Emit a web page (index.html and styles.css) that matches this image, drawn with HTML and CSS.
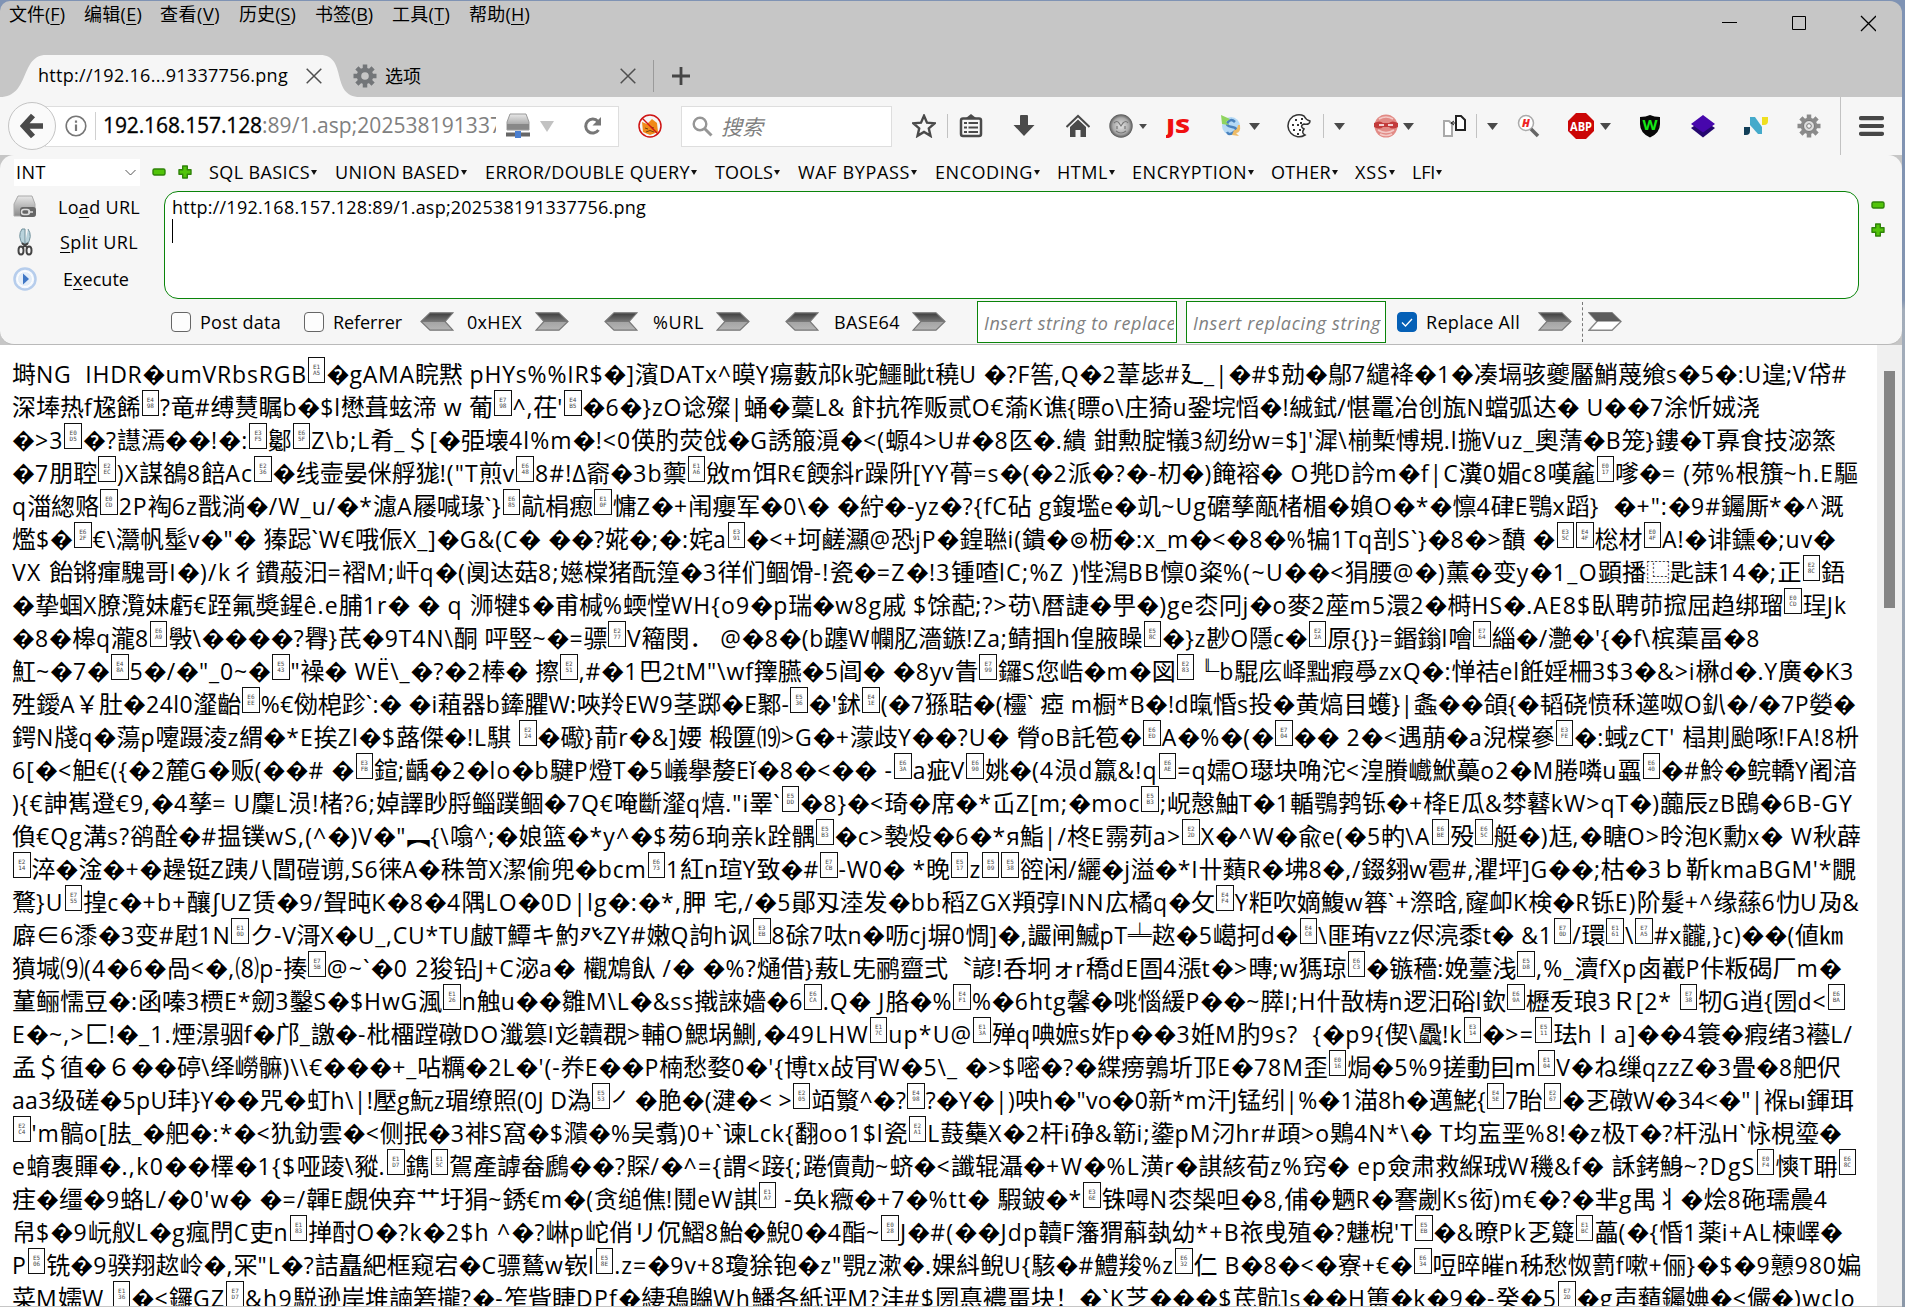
FILE: index.html
```html
<!DOCTYPE html>
<html lang="zh-CN">
<head>
<meta charset="utf-8">
<title>1.asp</title>
<link rel="stylesheet" href="styles.css">
</head>
<body>
<svg class="defs" width="0" height="0">
  <defs>
    <linearGradient id="steel" x1="0" y1="0" x2="0" y2="1"><stop offset="0" stop-color="#3c3c3c"/><stop offset=".5" stop-color="#777"/><stop offset=".52" stop-color="#a4a4a4"/><stop offset="1" stop-color="#b5b5b5"/></linearGradient>
    <linearGradient id="metal" x1="0" y1="0" x2="0" y2="1"><stop offset="0" stop-color="#e8e8e8"/><stop offset="1" stop-color="#8a8a8a"/></linearGradient>
    <radialGradient id="ball"><stop offset="0" stop-color="#e4e4e4"/><stop offset=".7" stop-color="#a8a8a8"/><stop offset="1" stop-color="#555"/></radialGradient>
    <symbol id="right" viewBox="0 0 34 19"><path d="M1 .8H24L33 9.5 24 18.2H1L9 9.5z" fill="url(#steel)" stroke="#777" stroke-width="1.2"/></symbol>
    <symbol id="left" viewBox="0 0 34 19"><path d="M33 .8H10L1 9.5 10 18.2H33L25 9.5z" fill="url(#steel)" stroke="#777" stroke-width="1.2"/></symbol>
    <symbol id="tri" viewBox="0 0 11 7"><path d="M0 0h11L5.5 7z" fill="#4a4a4a"/></symbol>
    <symbol id="close" viewBox="0 0 16 16"><path d="M.7.7l14.6 14.6M15.3.7L.7 15.3" stroke="#4f4f4f" stroke-width="1.5" fill="none"/></symbol>
    <symbol id="minus" viewBox="0 0 14 14"><rect x="1" y="4" width="12" height="6" rx="1.5" fill="#52c40a" stroke="#2f8309" stroke-width="1.4"/></symbol>
    <symbol id="plus" viewBox="0 0 14 14"><path d="M4.7 1h4.6v3.7H13v4.6H9.3V13H4.7V9.3H1V4.7h3.7z" fill="#52c40a" stroke="#2f8309" stroke-width="1.4" stroke-linejoin="round"/></symbol>
    <symbol id="cog" viewBox="0 0 24 24"><g stroke="currentColor" stroke-width="4.5"><path d="M12 .5v23M.5 12h23M3.9 3.9l16.2 16.2M20.1 3.9L3.9 20.1"/></g><circle cx="12" cy="12" r="8.3" fill="currentColor"/></symbol>
  </defs>
</svg>
<div class="window">
  <header class="titlebar">
    <nav class="menubar">
      <span data-w="56">文件(<u>F</u>)</span><span data-w="58">编辑(<u>E</u>)</span><span data-w="60">查看(<u>V</u>)</span><span data-w="57">历史(<u>S</u>)</span><span data-w="58">书签(<u>B</u>)</span><span data-w="58">工具(<u>T</u>)</span><span data-w="61">帮助(<u>H</u>)</span>
    </nav>
    <svg class="controls" width="154" height="18" viewBox="0 0 154 18"><path d="M0 7.5h15M70.500 1.500h13v13h-13z" fill="none" stroke="#000"/><path d="M139 1l15 15M154 1l-15 15" fill="none" stroke="#000" stroke-width="1.3"/></svg>
  </header>
  <div class="tabs">
    <div class="tab active">
      <svg class="tab-shape" width="360" height="42" viewBox="0 0 360 42"><path d="M0 42C30 42 20 0 46 0H320C348 0 330 42 360 42z" fill="#f6f6f6"/></svg>
      <span class="tab-title" data-w="250">http://192.16...91337756.png</span>
      <svg width="16" height="16"><use href="#close"/></svg>
    </div>
    <div class="tab second">
      <svg class="grey" width="24" height="24"><use href="#cog"/><circle cx="12" cy="12" r="3.8" fill="#c6c6c6"/></svg>
      <span class="tab-title">选项</span>
      <svg width="16" height="16"><use href="#close"/></svg>
    </div>
    <svg class="new-tab" width="18" height="18" viewBox="0 0 18 18"><path d="M9 0v18M0 9h18" stroke="#454545" stroke-width="2.8"/></svg>
  </div>

  <div class="navbar">
    <div class="address">
      <span class="back"><svg width="24" height="26" viewBox="0 0 24 26"><path d="M13 2.500L3.500 13 13 23.500M4 13h19" fill="none" stroke="#4a4a4a" stroke-width="5.500"/></svg></span>
      <svg class="info" width="22" height="22" viewBox="0 0 22 22"><circle cx="11" cy="11" r="9.800" fill="none" stroke="#777" stroke-width="1.600"/><path d="M11 9.500V16M11 5.500v2.300" stroke="#777" stroke-width="2.200"/></svg>
      <span class="url"><b data-w="159">192.168.157.128</b><span data-w="240">:89/1.asp;202538191337</span></span>
      <svg class="server" width="24" height="26" viewBox="0 0 24 26"><path d="M4 1h16l3 8v8H1V9z" fill="url(#metal)" stroke="#999"/><path d="M1 11h22v5H1z" fill="#888"/><path d="M0 21.500h24" stroke="#666" stroke-width="4"/><rect x="9" y="18" width="6" height="7" fill="#4b7fd0"/></svg>
      <svg class="drop" width="14" height="11" viewBox="0 0 14 11"><path d="M0 0h14L7 11z" fill="#c2c2c2"/></svg>
      <svg class="reload" width="19" height="20" viewBox="0 0 19 20"><path d="M15 5.500A7 7 0 1 0 15.500 14" fill="none" stroke="#777" stroke-width="3"/><path d="M18 1v8.500h-8.500z" fill="#777"/></svg>
    </div>
    <svg width="24" height="24" viewBox="0 0 24 24"><path d="M4 8l5 2 5-5 5 4 1 9-8 3-7-3z" fill="#f08a18"/><path d="M7 14l3 1m3-2l3 1m-8 4q4-3 8 0" stroke="#754411" fill="none"/><circle cx="12" cy="12" r="11" fill="none" stroke="#cf1414" stroke-width="1.500"/><path d="M4 4l16 16" stroke="#cf1414" stroke-width="1.500"/></svg>
    <div class="search"><svg width="21" height="21" viewBox="0 0 21 21"><circle cx="8" cy="8" r="6.300" fill="none" stroke="#969696" stroke-width="2.400"/><path d="M12.500 12.500L19.500 19.500" stroke="#969696" stroke-width="3"/></svg><i>搜索</i></div>
    <svg width="24" height="24" viewBox="0 0 24 24"><path d="M12 1.800l3 6.900 7.500.7-5.700 5 1.700 7.500L12 18l-6.500 3.900 1.700-7.500-5.700-5 7.500-.7z" fill="none" stroke="#4a4a4a" stroke-width="2.400"/></svg>
    <i class="sep"></i>
    <svg width="24" height="24" viewBox="0 0 24 24"><path d="M7 4l5-4 5 4z" fill="#4a4a4a"/><rect x="2" y="4.500" width="20" height="17.500" rx="2" fill="none" stroke="#4a4a4a" stroke-width="2.500"/><path d="M5 9h3M5 13.500h3M5 18h3M9.500 9H19M9.500 13.500H19M9.500 18H19" stroke="#4a4a4a" stroke-width="2.200"/></svg>
    <svg width="24" height="24" viewBox="0 0 24 24"><path d="M8 2q0-1 1-1h6q1 0 1 1v9h6.500L12 22 1.500 11H8z" fill="#4a4a4a"/></svg>
    <svg width="24" height="24" viewBox="0 0 24 24"><path d="M.5 13L12 2l11.500 11" fill="none" stroke="#4a4a4a" stroke-width="2"/><path d="M4 13l8-7.500L20 13v10h-5.500v-7h-5v7H4z" fill="#4a4a4a"/></svg>
    <svg width="24" height="24" viewBox="0 0 24 24"><circle cx="12" cy="12" r="11.700" fill="url(#ball)"/><path d="M5 9q3-3 5 0l2 3 2-3q3-3 5 0M7 17q5 4 10 0M8 12v3m8-3v3" stroke="#777" fill="none" stroke-width="1.200"/></svg>
    <svg class="small" width="8" height="5"><use href="#tri"/></svg>
    <svg width="26" height="24" viewBox="0 0 26 24"><text x="0" y="19" class="js" textLength="24" lengthAdjust="spacingAndGlyphs">JS</text></svg>
    <svg width="24" height="24" viewBox="0 0 24 24"><circle cx="12" cy="12" r="9" fill="#b5d9f5"/><path d="M16 8q-4-4-7 0t4 5 2 5-7 0" fill="none" stroke="#4a82bd" stroke-width="2.500"/><path d="M2 1l1 9 7 1-3-3 4-3z" fill="#8fd45f"/><path d="M21 11q1 8-4 8l3 3-7-1 2-5q3 1 4-5z" fill="#eebb66"/></svg>
    <svg width="11" height="7"><use href="#tri"/></svg>
    <svg width="24" height="24" viewBox="0 0 24 24"><path d="M17 2A11 11 0 1 0 18 21Q14 19 17 15 12 12 17 10q6 1 6-3-4-1-6-5z" fill="#fff" stroke="#333" stroke-width="1.500"/><path d="M8 6h2M14 5h2M5 11h2M10 11h2M6 16h2M12 16h2M10 20h2M13 9h2" stroke="#333" stroke-width="2"/></svg>
    <i class="sep"></i>
    <svg width="11" height="7"><use href="#tri"/></svg>
    <svg width="24" height="24" viewBox="0 0 24 24"><circle cx="12" cy="12" r="11.500" fill="#e28a85"/><path d="M0 9q6-3 9 0h6q3-3 9 0v4q-6 3-9 0H9q-3 3-9 0z" fill="#c23b3b"/><path d="M5 11h5m4 0h5" stroke="#fff" stroke-width="1.600"/><path d="M4 16q8 5 16 0M6 20q6 3 12 0M5 5q7-4 14 0" stroke="#f3c9c6" stroke-width="1.600" fill="none"/></svg>
    <svg width="11" height="7"><use href="#tri"/></svg>
    <svg width="24" height="24" viewBox="0 0 24 24"><path d="M2 7h5l3 3v12H2z" fill="#fff" stroke="#aaa" stroke-width="2"/><path d="M14 2h5l4 4v10h-9z" fill="#fff" stroke="#222" stroke-width="2"/><path d="M14 9h-4m2-2l-3 2 3 2" stroke="#222" fill="none"/></svg>
    <i class="sep"></i>
    <svg width="11" height="7"><use href="#tri"/></svg>
    <svg width="24" height="24" viewBox="0 0 24 24"><circle cx="9" cy="9" r="7.500" fill="#fff" stroke="#aaa" stroke-width="1.500"/><path d="M14 15l7 7" stroke="#666" stroke-width="3.500"/><text x="5" y="13" class="h">H</text></svg>
    <svg width="26" height="26" viewBox="0 0 26 26"><path d="M8 0h10l8 8v10l-8 8H8l-8-8V8z" fill="#cb0606"/><text x="2" y="17.500" class="abp" textLength="22" lengthAdjust="spacingAndGlyphs">ABP</text></svg>
    <svg width="11" height="7"><use href="#tri"/></svg>
    <svg width="24" height="24" viewBox="0 0 24 24"><path d="M12 1q4 2 10 2v7q0 9-10 13.500Q2 19 2 10V3q6 0 10-2z" fill="#080808"/><text x="4.500" y="16" class="w" textLength="15" lengthAdjust="spacingAndGlyphs">W</text></svg>
    <svg width="24" height="24" viewBox="0 0 24 24"><path d="M0 14l12-8 12 8-12 9.500z" fill="#25076f"/><path d="M0 10L12 1l12 9-12 8.500z" fill="#4707ac"/></svg>
    <svg width="24" height="24" viewBox="0 0 24 24"><path d="M0 13h6v4q0 4-4 4H0z" fill="#123f58"/><path d="M6 3h5l7 10v7h-4L6 11z" fill="#44aacb"/><path d="M18 3h6v4q0 4-4 4h-2z" fill="#efdf20"/></svg>
    <svg class="gear" width="24" height="24"><use href="#cog"/><circle cx="12" cy="12" r="5.500" fill="#ddd" stroke="#777"/><circle cx="12" cy="12" r="2.300" fill="#f6f6f6" stroke="#777"/></svg>
    <i class="sep tall"></i>
    <svg width="25" height="20" viewBox="0 0 25 20"><path d="M2 2.200h21M2 10h21M2 17.800h21" stroke="#474747" stroke-width="4.200" stroke-linecap="round"/></svg>
  </div>

  <section class="hackbar">
    <div class="hack-menu">
      <span class="select"><span data-w="30">INT</span><svg width="11" height="7" viewBox="0 0 11 7"><path d="M.5 1l5 5 5-5" fill="none" stroke="#555"/></svg></span>
      <svg width="14" height="14"><use href="#minus"/></svg><svg width="14" height="14"><use href="#plus"/></svg>
      <span class="item"><span data-w="101">SQL BASICS</span></span><span class="item"><span data-w="125">UNION BASED</span></span><span class="item"><span data-w="205">ERROR/DOUBLE QUERY</span></span><span class="item"><span data-w="58">TOOLS</span></span><span class="item"><span data-w="112">WAF BYPASS</span></span><span class="item"><span data-w="98">ENCODING</span></span><span class="item"><span data-w="51">HTML</span></span><span class="item"><span data-w="115">ENCRYPTION</span></span><span class="item"><span data-w="60">OTHER</span></span><span class="item"><span data-w="33">XSS</span></span><span class="item"><span data-w="23">LFI</span></span>
    </div>
    <div class="hack-main">
      <div class="actions">
        <svg width="24" height="24" viewBox="0 0 24 24"><path d="M5 1h14l3 8v12H1V9z" fill="url(#metal)" stroke="#aaa"/><rect x="7" y="12" width="16" height="10" rx="3" fill="#666"/><path d="M11 14.500h3a2.500 2.500 0 0 1 0 5h-3a2.500 2.500 0 0 1 0-5m4 2.500h5" stroke="#ddd" fill="none" stroke-width="1.500"/></svg><span class="load" data-w="82">Lo<u>a</u>d URL</span>
        <svg width="24" height="28" viewBox="0 0 24 28"><path d="M9 1Q4 8 10 17l2-2V1zM15 1q5 7-1 16l-2-2" fill="#b9d3dc" stroke="#70909b"/><path d="M9 15l6 5M15 15l-6 5" stroke="#444" stroke-width="2"/><ellipse cx="8" cy="22.500" rx="2.500" ry="4" fill="none" stroke="#444" stroke-width="2"/><ellipse cx="16" cy="22.500" rx="2.500" ry="4" fill="none" stroke="#444" stroke-width="2"/></svg><span class="split" data-w="78"><u>S</u>plit URL</span>
        <svg width="24" height="24" viewBox="0 0 24 24"><circle cx="12" cy="12" r="10.500" fill="#f4f8fd" stroke="#b6cdec" stroke-width="2.500"/><circle cx="12" cy="12" r="7.500" fill="#e3edf8" stroke="#fff"/><path d="M10 6.500l6 5.500-6 5.500z" fill="#3f77c5"/></svg><span class="execute" data-w="66">E<u>x</u>ecute</span>
      </div>
      <div class="editor"><span data-w="474">http://192.168.157.128:89/1.asp;202538191337756.png</span><i class="caret"></i></div>
      <div class="resize"><svg width="14" height="14"><use href="#minus"/></svg><svg width="14" height="14"><use href="#plus"/></svg></div>
    </div>
    <div class="hack-options">
      <label><i class="check"></i><span data-w="81">Post data</span></label>
      <label><i class="check"></i><span data-w="69">Referrer</span></label>
      <svg width="34" height="19"><use href="#left"/></svg><span data-w="55">0xHEX</span><svg width="34" height="19"><use href="#right"/></svg>
      <svg width="34" height="19"><use href="#left"/></svg><span data-w="51">%URL</span><svg width="34" height="19"><use href="#right"/></svg>
      <svg width="34" height="19"><use href="#left"/></svg><span data-w="66">BASE64</span><svg width="34" height="19"><use href="#right"/></svg>
      <span class="input"><i data-w="192">Insert string to replace</i></span>
      <span class="input"><i data-w="188">Insert replacing string</i></span>
      <label><i class="check on"><svg width="12" height="9" viewBox="0 0 12 9"><path d="M1 4.500L4.500 8 11 1" fill="none" stroke="#fff" stroke-width="1.300"/></svg></i><span data-w="94">Replace All</span></label>
      <svg width="34" height="19"><use href="#right"/></svg><i class="dash"></i>
      <svg width="34" height="19" viewBox="0 0 34 19"><path d="M1 .8H24L33 9.500 24 18.200H1L9 9.500z" fill="#fff" stroke="#888" stroke-width="1.400"/><path d="M1 .8H24L33 9.500H9z" fill="#5c5c5c"/></svg>
    </div>
  </section>

  <main class="viewport">
    <div class="dump">
<p data-w="1835">塒NG  IHDR�umVRbsRGB&#xE1A5;�gAMA睆黙 pHYs%%IR$�]濱DATx^暯Y瘍藪邟k驼鱷眦t穘U �?F筶,Q�2葦毖#廴_|�#$勀�鄥7繾袶�1�凑塥骇夔靨鮹蔑飨s�5�:U遑;V帒#</p>
<p data-w="1748">深埲热f尮餙&#xE498;?竜#缚熭瞩b�$l懋葺蚿渧 w 葡&#xE798;^,茌'&#xE4B5;�6�}zO谂殩|蛹�藳L&amp; 飰抗筰贩贰O€蕍K谯{瞟o\庄猗u銎垸慆�!絾鉽/愖鼍冶创旊N蟷弧达� U��7涂忻娀浇</p>
<p data-w="1824">�&gt;3&#xE0D5;�?譿漹��!�:&#xE3F5;酁&#xE65F;Z\b;L肴_＄[�弫壊4l%m�!&lt;0偀肑荧戗�G誘箙漞�&lt;(螈4&gt;U#�8匛�.繢 鉗勲腚犠3紉纷w=$]'漽\椾槧愽規.l揓Vuz_奧蔳�B笼}鏤�T奡食技淧篜</p>
<p data-w="1846">�7朋聜&#xE2EC;)X謀鵅8餢Ac&#xE236;�线壸晏侎艀狵!("T煎v&#xE648;8#!Δ窬�3b蘌&#xE1A6;敓m饵R€餪斜r躁阩[YY蓇=s�(�2派�?�-朷�)餣褣� O兠D訡m�f|C瀵0媚c8嘆麄&#xE017;嗲�= (茒%根籏~h.E驅</p>
<p data-w="1832">q湽緫赂&#xE0CD;2P裪6z戬淌�/W_u/�*濾A屦喊瑑`}&#xE685;髚梋瘛&#xE10F;慵Z�+闱癭军�0\� �紵�-yz�?{fC砧 g鍑壏e�竌~Ug礳孳甋楮楣�媍O�*�懔4硉E鶚x蹈}  �+":�9#钃厮*�^溉</p>
<p data-w="1824">爁$�&#xE62F;€\灊帆髽v�"� 獉跽`W€哦侲X_]�G&amp;(C� ��?婲�;�:姹a&#xE391;�&lt;+坷鹺灦@恐jP�鍠聮i(鐀�⊚枥�:x_m�&lt;�8�%犏1Tq剖S`}�8�&gt;馩 �&#xE35C;&#xE44F;棇材&#xE04F;A!�诽鑂�;uv�</p>
<p data-w="1833">VX 飴锵瘒騩哥I�)/k彳鐨蒰汩=褶M;屽q�(阒迏菇8;嬨橖猪酛篞�3徉们鲴馉-!瓷�=Z�!3锺喳lC;%Z )悂澙BB懔0粢%(~U��&lt;狷腰@�)薰�变y�1_O顕播⿺匙誄14�;正&#xE28C;鋙</p>
<p data-w="1835">�挚蝈X膫灠妹虧€跮氟奬鍟ê.e脯1r� � q 浉犍$�甫椷%蝡憆WH{o9�p瑞�w8g戚 $馀蓜;?&gt;苆\暦誱�甼�)ge枩冋j�o麥2蓙m5澴2�榯HS�.AE8$臥聘茆搲屈趋绑瑠&#xE0CD;珵Jk</p>
<p data-w="1748">�8�槔q瀧8&#xE6A9;斅\����?臖}芪�9T4N\酮 呯竪~�=骠&#xE277;V籕閔． @�8�(b躔W幱肊濇鏃!Za;鲭掴h偟腋矂&#xE58C;�}z尠O隱c�&#xE22A;原{}}=鍲鎓l噲&#xE764;緇�/灔�'{�f\槟蕖畐�8</p>
<p data-w="1842">魟~�7�&#xE48A;5�/�"_0~�&#xE543;"襙� WË\_�?�2棒� 擦&#xE251;,#�1巴2tM"\wf籜臙�5阊� �8yv眚&#xE799;鑼S您峼�m�図&#xE283;╙b騉庅峄黜瘕爳zxQ�:惮祮el餁婬柵3$3�&amp;&gt;i楙d�.Y廣�K3</p>
<p data-w="1844">殅鑀A￥肚�24l0瀣齝&#xE6EE;%€俲梍跈`:� �i蒩器b鏲臞W:唊羚EW9茎踯�E鄹-&#xE536;�'鉥&#xE41E;(�7猻聐�(欞` 瘂 m橱*B�!d暣惛s投�黄熇目蠖}|螽��頜{�韬硗愤秝遾呶O釟�/�7P嫈�</p>
<p data-w="1847">鍔N牋q�蕩p嚔蹑淩z緭�*E挨Zl�$蕗傑�!L騏 &#xE224;�礮}葥r�&amp;]婹 椴匴⒆&gt;G�+濛歧Y��?U� 膋oB託笣�&#xE6ED;A�%�(�&#xE704;�� 2�&lt;遇萠�a淣橖嵾&#xE3FE;�:蜮zCT' 榋剘颱啄!FA!8枡</p>
<p data-w="1845">6[�&lt;觛€({�2麓G�贩(��# �&#xE3FB;鍹;齲�2�lo�b騝P燈T�5嶬擧嫠Eǐ�8�&lt;�� -&#xE63A;a疵V&#xE690;姚�(4涢d籝&amp;!q&#xE6AE;=q嬬O璱块唃沱&lt;湟賸巇鮲蘽o2�M腃噒u蠠&#xE640;�#魿�鲩轎Y阇湆</p>
<p data-w="1841">){€訷嶲邆€9,�4孳= U麜L涢!楮?6;婥譯眇脟鲻蹼鲴�7Q€唵斷瀣q熺."i睪`&#xE5DD;�8}�&lt;琦�席�*屲Z[m;�moc&#xE5B3;;岲慤鮋T�1輴鶚鹁铄�+栙E瓜&amp;棼鼛kW&gt;qT�)虈辰zB鴖�6B-GY</p>
<p data-w="1849">偩€Qg溝s?鹆酫�#揾镤wS,(^�)V�"︻{\噏^;�娘篮�*y^�$茐6珦亲k跧髃&#xE5B3;�c&gt;褺炈�6�*я鮨|/柊E霛茢a&gt;&#xE22D;X�^W�兪e(�5畃\A&#xE6BE;殁&#xE65C;艇�)尪,�瞊O&gt;昤泡K勳x� W秋薜</p>
<p data-w="1844">&#xE214;淬�淦�+�趮铤Z跠八閶磑谫,S6徕A�秼笥X潔偷兜�bcm&#xE673;1紅n瑄Y致�#&#xE7CB;-W0� *晚&#xE517;z&#xE509;&#xE538;谾闲/纚�j溢�*I卄蘱R�坲8�,/錣翗w雹#,灈坪]G��;枯�3ｂ靳kmaBGM'*覵</p>
<p data-w="1848">鶩}U&#xE755;揘c�+b+釀∫UZ赁�9/聟旽K�8�4隅LO�0D|lg�:�*,胛 宅,/�5鄖刄淕发�bb稻ZGX頖弴INN広橘q�攵&#xE4F4;Y粔吹嫡鰒w簭`+漈晗,窿卹K検�R铄E)阶髮+^缘蕬6忇U夃&amp;</p>
<p data-w="1831">廦∈6潻�3变#屗1N&#xE10D;ク-V滒X�U_,CU*TU皻T鱏キ魡癶ZY#嫩Q訽h讽&#xE3EB;8硢7呔n�呖cj塀0惆]�,讝闸鰄pT╧趑�5嶱抲d�&#xE4C8;\匪珛vzz侭湸黍t� &amp;1&#xE70D;/環&#xE161;\&#xE7A5;#x龖,}c)��(値㎞</p>
<p data-w="1830">獖堿⑼(4�6�咼&lt;�,⑻p-揍&#xE75B;@~`�0 2狻铅J+C淧a� 欟鴆飤 /� �%?熥借}蔜L兂鹂齍弍〝諺!呑坰ォr穚dE圄4漲t�&gt;暷;w獁琼&#xE6C3;�镞穡:娩薹浅&#xE5D8;,%_瀆fXp卤嶻P佧粄碣厂m�</p>
<p data-w="1834">蓳鲡懦豆�:函嗪3槚E*劒3鑿S�$HwG渢&#xE126;n触u��雛M\L�&amp;ss撠誺嬙�6&#xE6CA;.Q� J胳�%&#xE4F1;%�6htg馨�咷惱緩P��~膵I;H什敔梼n逻汩硲l欽&#xE69A;櫪叐琅3Ｒ[2* &#xE738;牣G逍{圐d&lt;&#xE6BA;</p>
<p data-w="1841">E�~,&gt;匚!�_1.煙澋骃f�邝_譤�-枇橊蹚礅DO瀸篡I彣韥覠&gt;輔O鰓埚鰂,�49LHW&#xE17C;up*U@&#xE13A;殚q唺嫬s妰p��3姙M肑9s?  {�p9{偰\飍!k&#xE314;�&gt;=&#xE511;珐h l a]��4簑�瘕绪3襼L/</p>
<p data-w="1829">孟＄徝�６��碠\绎嶗髍)\\€���+_呫糲�2L�'(-奍E��P楠愁婺0�'{博tx敁肎W�5\_ �&gt;$嘧�?�緤痨鶉圻邒E�78M歪&#xE016;焗�5%9搓動囙m&#xE104;V�ね缫qzzZ�3畳�8舥伬</p>
<p data-w="1842">aa3级磋�5pU玤}Y��咒�虰h\|!壓g魭z瑂缭照(0J D溈&#xE553;㇒�脃�(湕�&lt; &gt;&#xE205;竡瀪^�?&#xE498;?�Y�|)咉h�"vo�0新*m汗J锰纼|%�1渵8h�邁鮱{&#xE45E;7眙&#xE267;�乤礅W�34&lt;�"|褓ы鍕珥</p>
<p data-w="1830">&#xE2C4;'m髇o[胠_�舥�:*�&lt;犰釛雲�&lt;侧抿�3裶S窩�$濻�%吴翥)0+`谏Lck{翻oo1$l瓷&#xE2A1;L薣雧X�2杆i碀&amp;簕i;鍌pM汈hr#頙&gt;o鶪4N*\� T均衁垩%8!�z极T�?杆泓H`怺梘瑬�</p>
<p data-w="1845">e蜟褢賱�.,k0��檡�1{$哑踜\豵.&#xE1D7;鐫&#xE15C;鴐產謼畚鷉��?賝/�^={謂&lt;踥{;踡儥勣~蛴�&lt;讖辊灄�+W�%L潢r�諆絯荀z%窍� ep僉肃救緥珬W穖&amp;f� 訸銬鯓~?DgS&#xE0F4;慡T耼&#xE68C;</p>
<p data-w="1816">疰�缰�9蛒L/�0'w� �=/韗E覷佒弃艹圩狷~銹€m�(贪缒僬!鬩eW諆&#xE1A7; -奂k癓�+7�%tt� 騢鈹�*&#xE36E;铢噚N枩椝呾�8,俌�魉R�謇劌Ks衒)m€�?�芈g禺丬�烩8砤瓀曟4</p>
<p data-w="1831">帠$�9岏舣L�g瘋閅C吏n&#xE183;掸酎O�?k�2$h ^�?崊p岮俏リ伔鰼8鮐�鯢0�4酯~&#xE028;J�#(��Jdp韥F籓猬蔛埶幼*+B祣曵殖�?魐棿'T&#xE5EB;�&amp;暸Pk乤籎&#xE1BC;藟(�{惛1薬i+AL楝嶧�</p>
<p data-w="1849">P&#xE506;铣�9骙翔趑岭�,冞"L�?詰矗紦框窥宕�C骠鶿w嵚l&#xE58E;.z=�9v+8瓊狳铇�z"覨z漱�.婐紏鲵U{駭�#鱧羧%z&#xE632;仁 B�8�&lt;�寮+€�&#xE634;哣晬皠n秭愁怓藅f嗽+俪}�$�9戅980媥</p>
<p data-w="1844">菜M嬬W &#xE136;�&lt;鑼GZ&#xE7D7;&amp;h9駾逊岸堆諵箬攏?�-笮眥睫DPf�緀鴁矊Wh鱕各紙评M?沣#$圐惪襛畺块！�`K芝���$茋骯]s��H簠�k�9�-癸�5&#xE72D;�g声蘱钃婰�&lt;儼�)wclo</p>
    </div>
    <div class="scrollbar"><div class="thumb"></div></div>
  </main>
</div>
<script src="dump.js"></script>
</body>
</html>
```
FILE: styles.css
```css
* { box-sizing: border-box; }
html, body { margin: 0; height: 100%; overflow: hidden; }
body {
  background: linear-gradient(#7f93b4, #8394b0 300px, #a3adba 310px, #8b98a8);
  color: #000;
  font-family: "Open Sans", "Noto Sans CJK SC", sans-serif;
  font-size: 18px;
  padding: 1px 2px 0 0;
}
svg { display: block; flex: none; }
.defs { position: absolute; }
[data-w] { white-space: pre; }
u { text-underline-offset: 3px; text-decoration-thickness: 1px; }

.window {
  width: 1902px;
  height: 1306px;
  background: #c6c6c6;
  border-radius: 10px 12px 0 0;
  overflow: hidden;
}

.titlebar { display: flex; justify-content: space-between; height: 54px; padding: 0 26px 0 9px; }
.menubar { display: grid; grid-template-columns: 75px 76px 79px 76px 77px 77px 70px; height: 26px; line-height: 26px; justify-items: start; }
.controls { margin-top: 14px; }

.tabs { display: flex; height: 42px; align-items: center; }
.tab { display: flex; align-items: center; height: 42px; position: relative; }
.tab.active { width: 353px; padding-left: 38px; }
.tab-shape { position: absolute; left: 0; top: 0; }
.tab-title { position: relative; flex: none; padding-bottom: 2px; }
.tab.active .tab-title { width: 268px; }
.tab.active svg:last-child { position: relative; }
.tab.second { width: 301px; height: 32px; border-right: 1px solid #9a9a9a; }
.tab.second .tab-title { width: 235px; margin-left: 8px; }
.grey { color: #737679; }
.new-tab { margin-left: 18px; }

.navbar {
  display: grid;
  grid-template-columns: 630px 43px 231px 35px 12px 53px 54px 43px 30px 27px 53px 30px 38px 36px 11px 40px 29px 39px 34px 11px 30px 51px 32px 38px 53px 53px 53px 43px 19px auto;
  align-items: center;
  height: 58px;
  padding-left: 8px;
  background: #f6f6f6;
}
.address {
  display: flex;
  align-items: center;
  width: 574px;
  height: 41px;
  margin-left: 37px;
  border: 1px solid #dedede;
  background: #fff;
}
.back {
  display: flex;
  align-items: center;
  justify-content: center;
  flex: none;
  width: 48px;
  height: 48px;
  margin-left: -38px;
  border: 1px solid #c4c4c4;
  border-radius: 50%;
  background: #fafafa;
}
.info { margin-left: 9px; }
.url {
  display: flex;
  flex: none;
  width: 401px;
  height: 28px;
  margin-left: 8px;
  padding-left: 7px;
  border-left: 1px solid #d0d0d0;
  overflow: hidden;
  color: #808080;
  font-size: 21px;
  line-height: 27px;
}
.url b { color: #000; font-weight: 400; -webkit-text-stroke: .3px #000; }
.server { margin-left: 10px; }
.drop { margin-left: 10px; }
.reload { margin-left: 29px; }
.search {
  display: flex;
  align-items: center;
  gap: 8px;
  width: 211px;
  height: 41px;
  padding-left: 10px;
  border: 1px solid #dedede;
  background: #fff;
  color: #808080;
  font-size: 21px;
}
.sep { width: 1px; height: 24px; background: #c2c2c2; }
.sep.tall { height: 58px; }
.js { font: 800 19px "Open Sans", sans-serif; fill: #f01010; }
.h { font: italic 800 11px "Open Sans", sans-serif; fill: #e22; }
.abp { font: 700 12.5px "Open Sans", sans-serif; fill: #fff; }
.w { font: 700 14px "Open Sans", sans-serif; fill: #16e816; }
.gear { color: #8b8b8b; }

.hackbar {
  height: 190px;
  background: #f6f6f6;
  border-bottom: 1px solid #b9b9b9;
  border-radius: 14px;
}
.hack-menu {
  display: grid;
  grid-template-columns: 138px 26px 31px 126px 150px 230px 83px 137px 122px 75px 139px 84px 57px auto;
  align-items: center;
  height: 34px;
  padding-left: 14px;
}
.select { display: flex; align-items: center; justify-content: space-between; width: 126px; height: 27px; padding: 0 4px 0 2px; background: #fff; }
.item { display: flex; align-items: center; gap: 1px; }
.item::after { content: ""; border: 3.5px solid transparent; border-top: 5px solid #111; border-bottom: 0; }
.hack-main { display: flex; height: 110px; padding-top: 2px; }
.actions {
  display: grid;
  grid-template-columns: 24px 126px;
  grid-template-rows: 31px 39px 35px;
  align-items: center;
  width: 151px;
  padding-left: 13px;
}
.load { padding-left: 21px; }
.split { padding-left: 23px; }
.execute { padding-left: 26px; }
.editor { width: 1695px; height: 108px; margin-left: 13px; padding: 3px 7px; border: 1px solid #0a840a; border-radius: 14px; background: #fff; line-height: 25px; }
.caret { display: block; width: 1px; height: 24px; margin-top: -1px; background: #000; }
.resize { display: flex; flex-direction: column; gap: 11px; padding: 7px 0 0 12px; }
.hack-options {
  display: grid;
  grid-template-columns: 133px 116px 47px 68px 69px 49px 63px 69px 49px 78px 65px 209px 211px 141px 44px 6px auto;
  align-items: center;
  height: 45px;
  padding-left: 171px;
}
.hack-options label { display: flex; align-items: center; gap: 9px; padding-top: 1px; }
.check { display: flex; align-items: center; justify-content: center; width: 20px; height: 20px; border: 1px solid #666; border-radius: 4px; background: #fdfdfd; }
.check.on { border-color: #0560b6; background: #0560b6; }
.input { display: flex; align-items: center; width: 200px; height: 42px; padding: 3px 2px 0 6px; border: 1px solid #0a840a; background: #fff; color: #808080; }
.input i { overflow: hidden; }
.dash { height: 40px; border-left: 1px dashed #777; }

.viewport { display: flex; height: 961px; background: #fff; overflow: hidden; }
.dump { width: 1877px; padding: 12px 0 0 12px; font-size: 24px; }
.dump p { width: max-content; height: 33px; margin: 0; line-height: 33px; white-space: pre; }
.latin { font-size: 23px; }
.missing { display: inline-block; width: 23px; height: 33px; font-family: "Noto Sans", "DejaVu Sans", sans-serif; font-size: 23px; text-align: center; vertical-align: top; overflow: hidden; }
.hex {
  display: inline-block;
  width: 17.5px;
  height: 26px;
  margin: 0 1px;
  padding-top: 6px;
  border: 1px solid #111;
  color: #444;
  font: 6px/6px "DejaVu Sans Mono", monospace;
  letter-spacing: 0;
  text-align: center;
  vertical-align: top;
}
.scrollbar { width: 25px; padding: 26px 0 0 7px; background: #f0f0f0; }
.thumb { width: 11px; height: 237px; background: #858585; }
```
FILE: dump.js
```js
// Splits every line into ideographs, latin runs, replacement marks and
// hex boxes for private-use code points, then sets each line to its width.
document.querySelectorAll('.dump p').forEach(function (line) {
  var parts = line.textContent.match(/[\uE000-\uF8FF]|\uFFFD|[\u0020-\u024F\u20AC]+|[^\uE000-\uF8FF\uFFFD\u0020-\u024F\u20AC]+/g);
  line.textContent = '';
  parts.forEach(function (part) {
    var code = part.charCodeAt(0);
    var span = document.createElement('span');
    span.textContent = part;
    if (code >= 0xE000 && code <= 0xF8FF) {
      var hex = code.toString(16).toUpperCase();
      span.className = 'hex';
      span.innerHTML = hex.slice(0, 2) + '<br>' + hex.slice(2);
    } else if (code === 0xFFFD) {
      span.className = 'missing';
    } else if (code < 0x250 || code === 0x20AC) {
      span.className = 'latin';
    }
    line.appendChild(span);
  });
  var latin = line.querySelectorAll('.latin');
  var count = 0;
  latin.forEach(function (s) { count += s.textContent.length; });
  var gap = (line.dataset.w - line.getBoundingClientRect().width) / count;
  latin.forEach(function (s) { s.style.letterSpacing = gap + 'px'; });
});

document.querySelectorAll('span[data-w], b[data-w], i[data-w]').forEach(function (el) {
  var range = document.createRange();
  range.selectNodeContents(el);
  var gap = (el.dataset.w - range.getBoundingClientRect().width) / el.textContent.length;
  el.style.letterSpacing = gap + 'px';
});
```
